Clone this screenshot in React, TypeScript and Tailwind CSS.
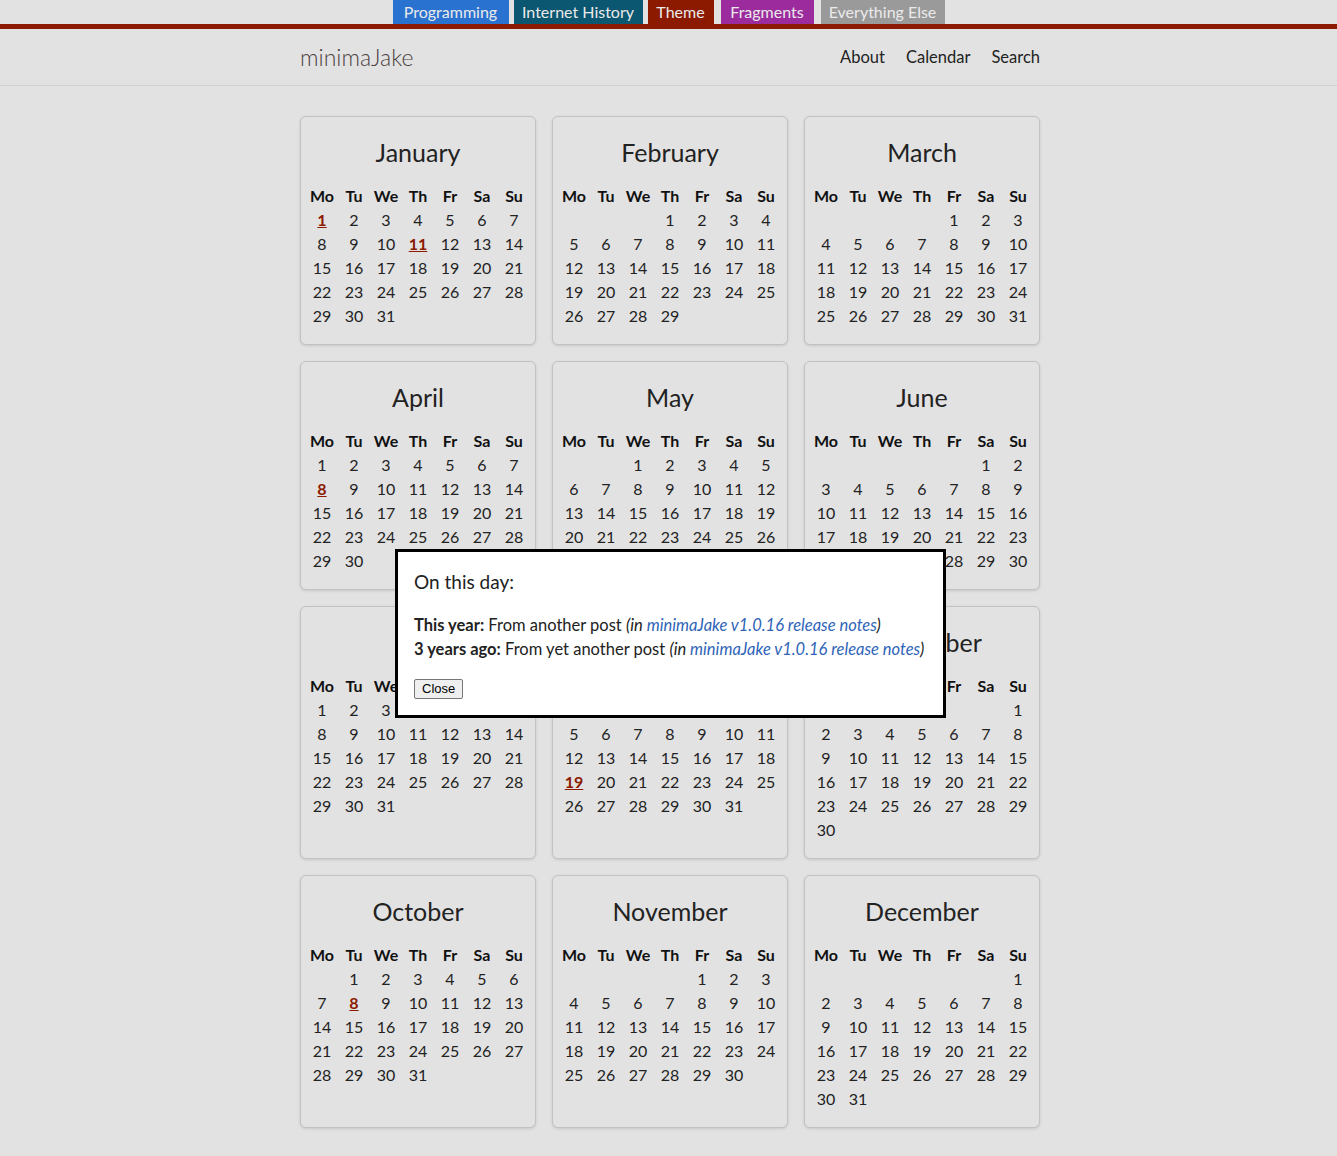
import React from "react";

const tabs = [
  { label: "Programming", cls: "bg-[#2a72d0] w-[116px]" },
  { label: "Internet History", cls: "bg-[#0b5670] w-[129px] ml-[5px]" },
  { label: "Theme", cls: "bg-[#8b1a00] w-[66px] ml-[5px]" },
  { label: "Fragments", cls: "bg-[#9c2c9e] w-[93px] ml-[7px]" },
  { label: "Everything Else", cls: "bg-[#9a9a9a] w-[124px] ml-[7px]" },
];

const months = [
  "January", "February", "March", "April", "May", "June",
  "July", "August", "September", "October", "November", "December",
];

const weekdays = ["Mo", "Tu", "We", "Th", "Fr", "Sa", "Su"];

// days that have posts
const linked: Record<number, number[]> = { 0: [1, 11], 3: [8], 7: [19], 9: [8] };

const YEAR = 2024;

function Month({ index }: { index: number }) {
  const offset = (new Date(YEAR, index, 1).getDay() + 6) % 7;
  const count = new Date(YEAR, index + 1, 0).getDate();
  const cells: (number | null)[] = [];
  for (let i = 0; i < offset; i++) cells.push(null);
  for (let d = 1; d <= count; d++) cells.push(d);
  const hits = linked[index] || [];

  return (
    <div className="rounded-md border border-[#c2c2c2] bg-[#e2e2e2] shadow-[0_1px_3px_rgba(0,0,0,0.12)] px-[5px] pt-[19px] pb-[16px]">
      <h2 className="text-center text-[25px] leading-8 text-[#222]">{months[index]}</h2>
      <div className="mt-[16px] grid grid-cols-[repeat(7,32px)] text-[16px] leading-6 text-[#222]">
        {weekdays.map((w) => (
          <div key={w} className="text-center font-bold text-[#111]">{w}</div>
        ))}
        {cells.map((d, i) =>
          d === null ? (
            <div key={i} />
          ) : hits.includes(d) ? (
            <div key={i} className="text-center">
              <a href="#" className="font-bold text-[#8b1a00] underline">{d}</a>
            </div>
          ) : (
            <div key={i} className="text-center">{d}</div>
          )
        )}
      </div>
    </div>
  );
}

export default function App() {
  return (
    <div className="relative min-h-[1156px] bg-[#e2e2e2] font-['Lato',sans-serif] text-[#222]">
      <div className="flex justify-center">
        {tabs.map((t) => (
          <a key={t.label} href="#" className={`${t.cls} text-center text-[16px] leading-6 text-[#eaeaea]`}>
            {t.label}
          </a>
        ))}
      </div>
      <div className="h-[5px] bg-[#8b1a00]" />
      <header className="border-b border-[#d0d0d0]">
        <div className="ml-[300px] flex h-[56px] w-[740px] items-center justify-between">
          <a href="#" className="text-[23px] font-light text-[#4a3f3f]">minimaJake</a>
          <nav className="flex gap-[21px] text-[16.5px] text-[#222]">
            <a href="#">About</a>
            <a href="#">Calendar</a>
            <a href="#">Search</a>
          </nav>
        </div>
      </header>
      <main className="ml-[300px] grid w-[740px] grid-cols-3 gap-4 pt-[30px] pb-[28px]">
        {months.map((_, i) => (
          <Month key={i} index={i} />
        ))}
      </main>

      <div className="absolute left-[395px] top-[549px] w-[551px] border-[3px] border-black bg-white px-4 pt-[16px] pb-[16px]">
        <p className="text-[19px] leading-7">On this day:</p>
        <div className="mt-[17px] whitespace-nowrap text-[16.5px] leading-6">
          <p>
            <b>This year:</b> From another post{" "}
            <i>
              (in <a href="#" className="text-[#2f64b8]">minimaJake v1.0.16 release notes</a>)
            </i>
          </p>
          <p>
            <b>3 years ago:</b> From yet another post{" "}
            <i>
              (in <a href="#" className="text-[#2f64b8]">minimaJake v1.0.16 release notes</a>)
            </i>
          </p>
        </div>
        <button className="mt-[18px] block h-[20px] rounded-[2px] border border-[#767676] bg-[#efefef] px-[7px] font-['Liberation_Sans',sans-serif] text-[13px] leading-[18px] text-black">
          Close
        </button>
      </div>
    </div>
  );
}
